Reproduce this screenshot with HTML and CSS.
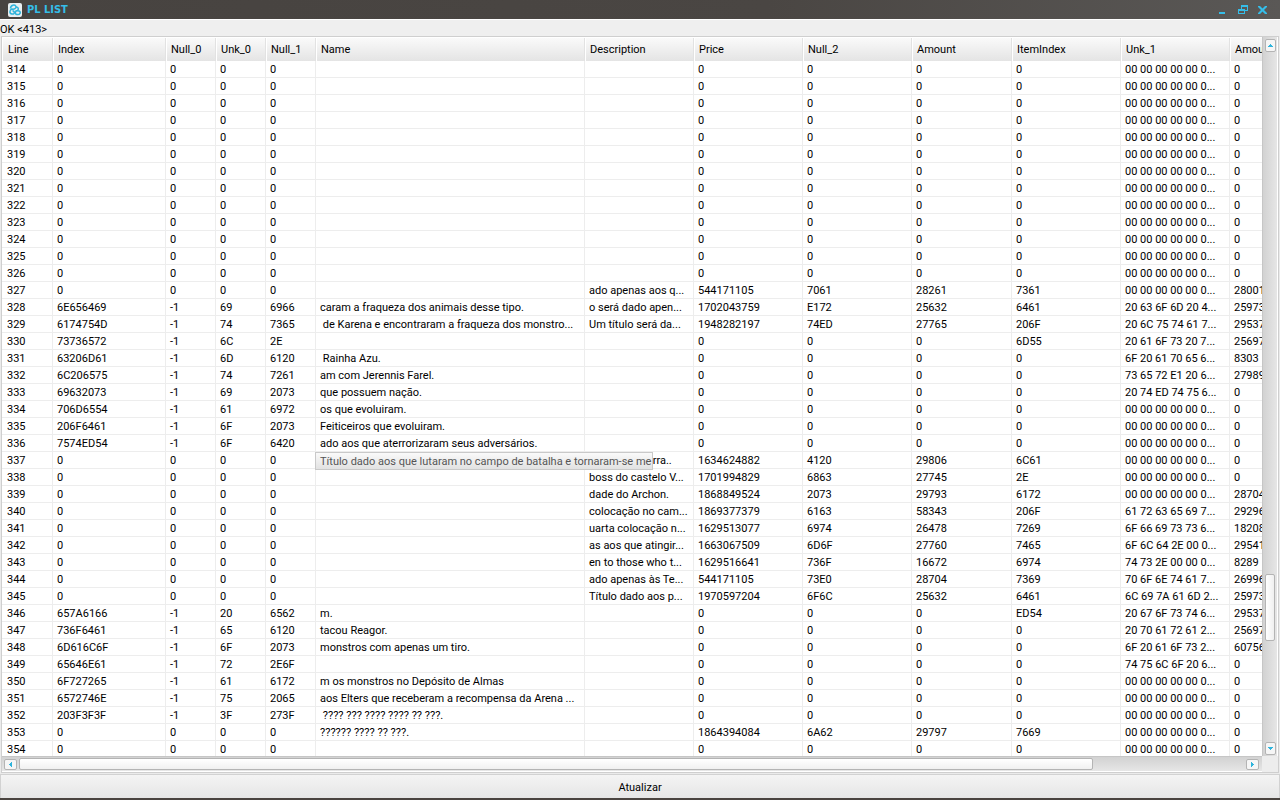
FILE: index.html
```
<!DOCTYPE html>
<html lang="pt">
<head>
<meta charset="utf-8">
<title>PL LIST</title>
<link rel="stylesheet" href="styles.css">
</head>
<body>
<header class="titlebar">
  <svg class="logo" viewBox="0 0 14 14" aria-hidden="true">
    <rect width="14" height="14" rx="2" fill="#e9eef0"/>
    <g fill="none" stroke="#2fb4dc" stroke-width="1.500">
      <path d="M2.500 5.500C2.500 2 7 1 8 3.500C8.500 5.500 6 6.500 4 6C1.500 7 1 10.500 4 11C7 11.500 7 8.500 4.500 7.500"/>
      <path d="M8 4C10.500 4 11 6 9.500 7.500C7 7.500 6.500 11 9 11.500C12 12 13.500 9 11 8C9.500 7.500 8 8 6.500 9.500"/>
    </g>
  </svg>
  <h1 class="title">PL LIST</h1>
  <div class="controls">
    <button class="control" aria-label="Minimizar"><svg viewBox="0 0 10 10"><path d="M1 7h6v2H1z"/></svg></button>
    <button class="control" aria-label="Restaurar"><svg viewBox="0 0 10 10"><path fill-rule="evenodd" d="M3 0h7v6H7v3H0V4h3zM4 2v2h3v1h2V2zM1 6v2h5V6z"/></svg></button>
    <button class="control" aria-label="Fechar"><svg viewBox="0 0 10 10"><path d="M0 1h2l2.500 2.500L7 1h2v1L6 5l3 3v1H7L4.500 6.500 2 9H0V8l3-3-3-3z"/></svg></button>
  </div>
</header>
<p class="status">OK &lt;413&gt;</p>
<main class="frame">
  <div class="viewport">
    <table class="grid">
      <colgroup>
        <col class="w-line"><col class="w-index"><col class="w-small"><col class="w-small"><col class="w-small">
        <col class="w-name"><col class="w-mid"><col class="w-mid"><col class="w-mid"><col class="w-item"><col class="w-mid"><col class="w-mid"><col class="w-mid">
      </colgroup>
      <thead>
        <tr><th>Line</th><th>Index</th><th>Null_0</th><th>Unk_0</th><th>Null_1</th><th>Name</th><th>Description</th><th>Price</th><th>Null_2</th><th>Amount</th><th>ItemIndex</th><th>Unk_1</th><th>Amount_1</th></tr>
      </thead>
      <tbody id="rows"></tbody>
    </table>
  </div>
  <div class="vscroll">
    <button class="arrow" aria-label="Rolar para cima"><svg viewBox="0 0 5 3"><path d="M0 3V2h1V1h1V0h1v1h1v1h1v1z"/></svg></button>
    <div class="vtrack"><div class="vbefore"></div><div class="vthumb"></div><div class="vafter"></div></div>
    <button class="arrow" aria-label="Rolar para baixo"><svg viewBox="0 0 5 3"><path d="M0 0v1h1v1h1v1h1V2h1V1h1V0z"/></svg></button>
  </div>
  <div class="hscroll">
    <button class="arrow wide" aria-label="Rolar para a esquerda"><svg class="side" viewBox="0 0 3 5"><path d="M3 0H2v1H1v1H0v1h1v1h1v1h1z"/></svg></button>
    <div class="htrack"><div class="hthumb"></div><div class="hafter"></div></div>
    <button class="arrow wide" aria-label="Rolar para a direita"><svg class="side" viewBox="0 0 3 5"><path d="M0 0h1v1h1v1h1v1H2v1H1v1H0z"/></svg></button>
  </div>
  <div class="corner"></div>
</main>
<button class="refresh">Atualizar</button>
<script src="rows.js"></script>
</body>
</html>
```
FILE: rows.js
```
// Columns: Line|Index|Null_0|Unk_0|Null_1|Name|Description|Price|Null_2|Amount|ItemIndex|Unk_1|Amount_1
const zeros = '00 00 00 00 00 0...';
const empty = line => `${line}|0|0|0|0|||0|0|0|0|${zeros}|0`;
const lines = [];
for (let line = 314; line <= 326; line++) lines.push(empty(line));
lines.push(
  `327|0|0|0|0||ado apenas aos q...|544171105|7061|28261|7361|${zeros}|28001`,
  '328|6E656469|-1|69|6966|caram a fraqueza dos animais desse tipo.|o será dado apen...|1702043759|E172|25632|6461|20 63 6F 6D 20 4...|25973',
  '329|6174754D|-1|74|7365| de Karena e encontraram a fraqueza dos monstro...|Um título será da...|1948282197|74ED|27765|206F|20 6C 75 74 61 7...|29537',
  '330|73736572|-1|6C|2E|||0|0|0|6D55|20 61 6F 73 20 7...|25697',
  '331|63206D61|-1|6D|6120| Rainha Azu.||0|0|0|0|6F 20 61 70 65 6...|8303',
  '332|6C206575|-1|74|7261|am com Jerennis Farel.||0|0|0|0|73 65 72 E1 20 6...|27989',
  '333|69632073|-1|69|2073|que possuem nação.||0|0|0|0|20 74 ED 74 75 6...|0',
  `334|706D6554|-1|61|6972|os que evoluiram.||0|0|0|0|${zeros}|0`,
  `335|206F6461|-1|6F|2073|Feiticeiros que evoluiram.||0|0|0|0|${zeros}|0`,
  `336|7574ED54|-1|6F|6420|ado aos que aterrorizaram seus adversários.||0|0|0|0|${zeros}|0`,
  `337|0|0|0|0|#|dado em guerra..|1634624882|4120|29806|6C61|${zeros}|0`,
  `338|0|0|0|0||boss do castelo V...|1701994829|6863|27745|2E|${zeros}|0`,
  `339|0|0|0|0||dade do Archon.|1868849524|2073|29793|6172|${zeros}|28704`,
  '340|0|0|0|0||colocação no cam...|1869377379|6163|58343|206F|61 72 63 65 69 7...|29296',
  '341|0|0|0|0||uarta colocação n...|1629513077|6974|26478|7269|6F 66 69 73 73 6...|18208',
  '342|0|0|0|0||as aos que atingir...|1663067509|6D6F|27760|7465|6F 6C 64 2E 00 0...|29541',
  '343|0|0|0|0||en to those who t...|1629516641|736F|16672|6974|74 73 2E 00 00 0...|8289',
  '344|0|0|0|0||ado apenas às Te...|544171105|73E0|28704|7369|70 6F 6E 74 61 7...|26996',
  '345|0|0|0|0||Título dado aos p...|1970597204|6F6C|25632|6461|6C 69 7A 61 6D 2...|25973',
  '346|657A6166|-1|20|6562|m.||0|0|0|ED54|20 67 6F 73 74 6...|29537',
  '347|736F6461|-1|65|6120|tacou Reagor.||0|0|0|0|20 70 61 72 61 2...|25697',
  '348|6D616C6F|-1|6F|2073|monstros com apenas um tiro.||0|0|0|0|6F 20 61 6F 73 2...|60756',
  '349|65646E61|-1|72|2E6F|||0|0|0|0|74 75 6C 6F 20 6...|0',
  `350|6F727265|-1|61|6172|m os monstros no Depósito de Almas||0|0|0|0|${zeros}|0`,
  `351|6572746E|-1|75|2065|aos Elters que receberam a recompensa da Arena ...||0|0|0|0|${zeros}|0`,
  `352|203F3F3F|-1|3F|273F| ???? ??? ???? ???? ?? ???.||0|0|0|0|${zeros}|0`,
  `353|0|0|0|0|?????? ???? ?? ???.||1864394084|6A62|29797|7669|${zeros}|0`,
  empty(354)
);

const body = document.getElementById('rows');
for (const line of lines) {
  const row = body.insertRow();
  for (const value of line.split('|')) {
    const cell = row.insertCell();
    if (value === '#') {
      cell.className = 'hovered';
      const tip = document.createElement('div');
      tip.className = 'tooltip';
      tip.setAttribute('role', 'tooltip');
      tip.textContent = 'Título dado aos que lutaram no campo de batalha e tornaram-se me';
      cell.append(tip);
    } else {
      cell.textContent = value;
    }
  }
}
```
FILE: styles.css
```
* { box-sizing: border-box; }

body {
  margin: 0;
  height: 100vh;
  display: flex;
  flex-direction: column;
  overflow: hidden;
  background: #ebebeb;
  border-bottom: 2px solid #4a4440;
  color: #000;
  font: 11px/16px Roboto, "DejaVu Sans Condensed", sans-serif;
}

button { padding: 0; color: inherit; font: inherit; }

.titlebar {
  flex: none;
  display: flex;
  align-items: center;
  height: 19px;
  padding: 1px 12px 0 8px;
  background: linear-gradient(90deg, #474340, #4a4643 60%, #5a5856);
}

.logo { width: 14px; height: 14px; }

.title {
  margin: 0 auto 0 5px;
  color: #35bde8;
  font: bold 11px/16px "DejaVu Sans Condensed", sans-serif;
}

.controls { display: flex; gap: 10px; }

.control {
  width: 10px;
  height: 10px;
  border: 0;
  background: none;
}

.control svg { display: block; width: 10px; height: 10px; fill: #35bde8; }

.status {
  flex: none;
  height: 17px;
  margin: 0;
  padding-top: 2px;
  border-top: 1px solid #fff;
  background: #efefef;
}

.frame {
  flex: 1;
  min-height: 0;
  display: grid;
  grid-template: minmax(0, 1fr) 16px / minmax(0, 1fr) 16px;
  margin: 0 1px 1px;
  border: 1px solid #cfcfcf;
}

.viewport {
  overflow: hidden;
  padding-top: 1px;
  background: #fff;
}

.grid { border-collapse: separate; border-spacing: 0; table-layout: fixed; width: 1336px; }

.w-line { width: 51px; }
.w-index { width: 113px; }
.w-small { width: 50px; }
.w-name { width: 269px; }
.w-mid { width: 109px; }
.w-item { width: 100px; }

.grid th {
  height: 23px;
  padding: 0 4px;
  border-left: 1px solid #fff;
  border-right: 1px solid #e2e2e2;
  background: linear-gradient(#fafafa, #e4e4e4);
  font-weight: normal;
  text-align: left;
}

.grid td {
  height: 17px;
  padding: 2px 4px 0;
  border-right: 1px solid #ededed;
  border-bottom: 1px solid #ededed;
  line-height: 14px;
  white-space: pre;
}

.grid th:first-child, .grid td:first-child { padding-left: 5px; }

.grid .hovered { position: relative; }

.tooltip {
  position: absolute;
  top: 0;
  left: -1px;
  height: 18px;
  padding: 1px 1px 0 4px;
  border: 1px solid #c9c9c9;
  background: linear-gradient(#fafafa, #e2e2e2);
  color: #555;
  line-height: 16px;
}

.vscroll {
  display: flex;
  flex-direction: column;
  align-items: center;
  padding: 2px 1px 1px;
  border-left: 1px solid #c6c6c6;
  border-right: 1px solid #fff;
  background: linear-gradient(90deg, #d2d2d2, #e6e6e6);
}

.vtrack { flex: 1; align-self: stretch; display: flex; flex-direction: column; }
.vbefore { flex: 521; }
.vthumb { flex: 65; margin: 0 1px; border: 1px solid #b4b4b4; border-radius: 2px; background: linear-gradient(90deg, #fff, #f0f0f0); }
.vafter { flex: 101; }

.hscroll {
  display: flex;
  align-items: center;
  padding: 0 3px 0 2px;
  border-top: 1px solid #c6c6c6;
  border-bottom: 1px solid #fff;
  background: linear-gradient(#d2d2d2, #e6e6e6);
}

.htrack { flex: 1; align-self: stretch; display: flex; padding: 1px 0 1px 2px; }
.hthumb { flex: 1073; border: 1px solid #b4b4b4; border-radius: 2px; background: linear-gradient(#fff, #f0f0f0); }
.hafter { flex: 153; }

.arrow {
  flex: none;
  display: flex;
  align-items: center;
  justify-content: center;
  width: 11px;
  height: 13px;
  border: 1px solid #b4b4b4;
  border-radius: 2px;
  background: #f6f6f6;
}

.arrow.wide { width: 13px; height: 11px; }
.arrow svg { width: 5px; height: 3px; fill: #2fb4dc; }
.arrow .side { width: 3px; height: 5px; }

.corner { background: #ededed; }

.refresh {
  flex: none;
  height: 24px;
  padding-top: 3px;
  border: 1px solid #d2d2d2;
  border-bottom: 0;
  background: linear-gradient(#f4f4f4, #e6e6e6);
}
```
